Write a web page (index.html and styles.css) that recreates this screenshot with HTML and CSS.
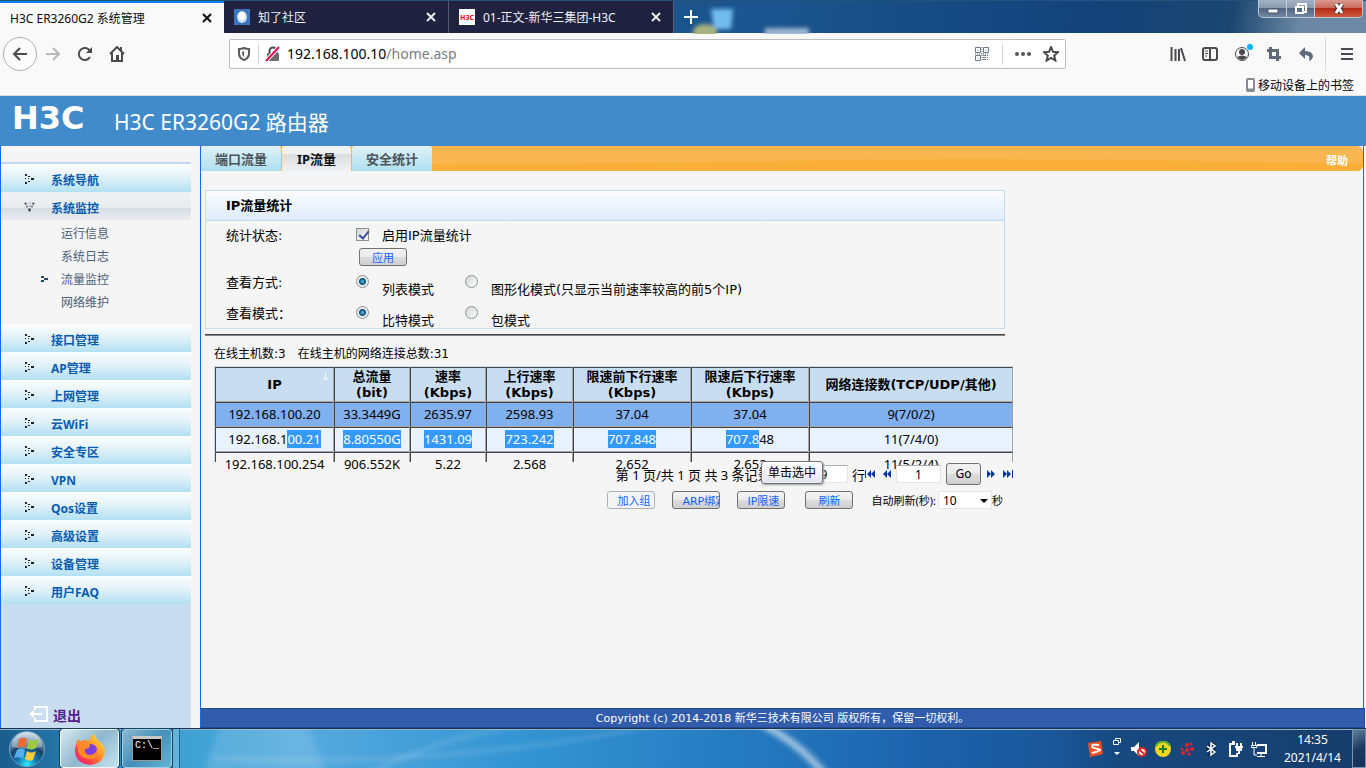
FILE: index.html
```html
<!DOCTYPE html>
<html lang="zh-CN">
<head>
<meta charset="UTF-8">
<meta name="viewport" content="width=device-width, initial-scale=1.0">
<title>H3C ER3260G2 系统管理</title>
<link rel="stylesheet" href="styles.css">
</head>
<body>

<header class="browser">
    <div class="titlebar">
        <div class="tab active"><span>H3C ER3260G2 系统管理</span>
            <button class="close" aria-label="关闭"><svg width="10" height="10"><path d="M1 1L9 9M9 1L1 9"/></svg></button></div>
        <div class="tab">
            <svg class="favicon" width="16" height="16"><rect width="16" height="16" fill="#3f73bd"/><ellipse cx="8" cy="8" rx="5" ry="6" fill="#cfe5f5"/><ellipse cx="8" cy="7" rx="3" ry="4" fill="#fff"/></svg>
            <span>知了社区</span>
            <button class="close" aria-label="关闭"><svg width="10" height="10"><path d="M1 1L9 9M9 1L1 9"/></svg></button></div>
        <div class="tab">
            <span class="favicon h3c">H3C</span>
            <span>01-正文-新华三集团-H3C</span>
            <button class="close" aria-label="关闭"><svg width="10" height="10"><path d="M1 1L9 9M9 1L1 9"/></svg></button></div>
        <button class="newtab" aria-label="新标签页"><svg width="14" height="14"><path d="M7 0V14M0 7H14" stroke="#fff" stroke-width="2"/></svg></button>
        <svg class="desktop" width="140" height="33">
            <defs><filter id="soft"><feGaussianBlur stdDeviation="2"/></filter></defs>
            <g filter="url(#soft)"><path d="M22 8h22l-2 20H25z" fill="#72bdf0"/><ellipse cx="16" cy="31" rx="12" ry="8" fill="#a9b27e"/><rect x="76" y="27" width="44" height="8" fill="#9db7d2"/></g>
        </svg>
        <div class="wincontrols">
            <button class="min" aria-label="最小化"><svg width="12" height="10"><rect x="1" y="5" width="10" height="4" fill="#fff" stroke="#4a5666"/></svg></button>
            <button class="max" aria-label="还原"><svg width="13" height="12" fill="none"><path d="M4 3V1h8v8h-3" stroke="#fff" stroke-width="2"/><rect x="2" y="4" width="7" height="6" stroke="#fff" stroke-width="2"/></svg></button>
            <button class="shut" aria-label="关闭窗口"><svg width="12" height="11"><path d="M3 1L9 10M9 1L3 10" stroke="#4b3034" stroke-width="5"/><path d="M3 1L9 10M9 1L3 10" stroke="#fff" stroke-width="3"/></svg></button>
        </div>
    </div>

    <div class="navbar">
        <button class="back" aria-label="后退"><svg class="ico" viewBox="0 0 16 16"><path d="M15 8H2M8 2L2 8l6 6"/></svg></button>
        <button class="navbtn off" aria-label="前进"><svg class="ico" viewBox="0 0 16 16"><path d="M1 8h13M8 2l6 6-6 6"/></svg></button>
        <button class="navbtn" aria-label="刷新"><svg class="ico" viewBox="0 0 16 16"><path d="M13 11a6 6 0 1 1 0-6"/><path d="M15 1v6H9z" fill="#4a4a4f" stroke="none"/></svg></button>
        <button class="navbtn" aria-label="主页"><svg class="ico" viewBox="0 0 16 16"><path d="M1 8l7-7 7 7M3 7v8h10V7M12 5V1"/><rect x="7" y="9" width="3" height="6" fill="#4a4a4f" stroke="none"/></svg></button>
        <div class="urlbar">
            <svg class="ico shield" viewBox="0 0 16 16"><path d="M8 2c2 1 3 1 5 1v4c0 4-2 6-5 7-3-1-5-3-5-7V3c2 0 3 0 5-1z"/><path d="M8 5v6C7 10 6 9 6 6z" fill="#5a5a5f" stroke="none"/></svg>
            <i class="sep"></i>
            <svg class="ico lock" viewBox="0 0 16 16"><path d="M4.500 7V5a3.500 3.500 0 0 1 7 0v2"/><rect x="2" y="7" width="12" height="8" rx="1" fill="#6b6b70" stroke="none"/><path d="M1 15L14 1" stroke="#fff" stroke-width="4"/><path d="M1 15L14 1" stroke="#e8104f" stroke-width="2"/></svg>
            <span class="url">192.168.100.10<em>/home.asp</em></span>
            <svg class="qr" width="14" height="14" fill="none" stroke="#6d7a89"><path d="M.5.5h5v5h-5zM8.500.5h5v5h-5zM.5 8.500h5v5h-5zM2.500 3h1M10.500 3h1M2.500 11h1"/><path d="M7 0v14M0 7h14M8 8.500h6M8 10.500h6M8 12.500h6M9.500 8v6M12.500 8v6" stroke-dasharray="1 1"/></svg>
            <i class="sep"></i>
            <svg class="dots" width="18" height="6" fill="#55555a"><circle cx="3" cy="3" r="2"/><circle cx="9" cy="3" r="2"/><circle cx="15" cy="3" r="2"/></svg>
            <svg class="ico" viewBox="0 0 16 16"><path d="M8 1l2 4.800 5 .4-3.800 3.400 1.200 5L8 12l-4.400 2.600 1.200-5L1 6.200l5-.4z"/></svg>
        </div>
        <button class="navbtn" aria-label="书库"><svg class="ico" viewBox="0 0 16 16"><path d="M1.500 1v14M5.500 3v12M9 3v12M11 2l4 13"/></svg></button>
        <button class="navbtn" aria-label="侧栏"><svg class="ico" viewBox="0 0 16 16"><rect x="1" y="2" width="14" height="12" rx="2"/><path d="M8 2v12"/><path d="M3 5h3M3 7.500h3M3 10h2" stroke-width="1"/></svg></button>
        <button class="navbtn account" aria-label="账户"><svg class="ico" viewBox="0 0 16 16"><circle cx="8" cy="8" r="6.500" stroke-width="1"/><circle cx="8" cy="6" r="3" fill="#4a4a4f" stroke="none"/><path d="M3 11q5-3 10 0-2 3-5 3t-5-3" fill="#4a4a4f" stroke="none"/></svg></button>
        <button class="navbtn" aria-label="截图"><svg class="ico blue" viewBox="0 0 16 16"><path d="M4.500 1v10.500H15M1 4.500h10.500V15" stroke-width="3"/></svg></button>
        <button class="navbtn" aria-label="撤销"><svg class="ico" viewBox="0 0 16 16"><path d="M1 7l6-6v4q8 0 8 6-1 3-4 4 2-6-4-6v4z" fill="#5f6b79" stroke="none"/></svg></button>
        <i class="navsep"></i>
        <button class="navbtn" aria-label="菜单"><svg class="ico" viewBox="0 0 16 16"><path d="M2 3h12M2 8h12M2 13h12"/></svg></button>
    </div>

    <div class="bookmarks">
        <svg width="9" height="14"><rect x="1" y="1" width="7" height="12" rx="1" fill="#fff" stroke="#858b92" stroke-width="2"/><path d="M1 12h7" stroke="#858b92" stroke-width="3"/></svg>
        <span>移动设备上的书签</span>
    </div>
</header>

<div class="brand">
    <span class="logo">H3C</span>
    <h1>H3C ER3260G2 路由器</h1>
</div>

<div class="page">
    <svg class="defs" width="0" height="0">
        <symbol id="arrow" viewBox="0 0 9 10"><path d="M0 0h2v2H0zM3 2h2v1H3zM0 4h1v1H0zM6 4h3v2H6zM3 7h2v1H3zM0 8h2v2H0zM3 4h1v1H3z"/></symbol>
    </svg>
    <nav class="sidebar">
        <a href="#" class="item"><svg><use href="#arrow"/></svg>系统导航</a>
        <a href="#" class="item open"><svg><use href="#arrow"/></svg>系统监控</a>
        <div class="sub">
            <a href="#">运行信息</a>
            <a href="#">系统日志</a>
            <a href="#" class="current"><svg width="7" height="6"><path d="M0 0h3v2H0zM3 2h4v2H3zM0 4h3v2H0z"/></svg>流量监控</a>
            <a href="#">网络维护</a>
        </div>
        <a href="#" class="item"><svg><use href="#arrow"/></svg>接口管理</a>
        <a href="#" class="item"><svg><use href="#arrow"/></svg>AP管理</a>
        <a href="#" class="item"><svg><use href="#arrow"/></svg>上网管理</a>
        <a href="#" class="item"><svg><use href="#arrow"/></svg>云WiFi</a>
        <a href="#" class="item"><svg><use href="#arrow"/></svg>安全专区</a>
        <a href="#" class="item"><svg><use href="#arrow"/></svg>VPN</a>
        <a href="#" class="item"><svg><use href="#arrow"/></svg>Qos设置</a>
        <a href="#" class="item"><svg><use href="#arrow"/></svg>高级设置</a>
        <a href="#" class="item"><svg><use href="#arrow"/></svg>设备管理</a>
        <a href="#" class="item"><svg><use href="#arrow"/></svg>用户FAQ</a>
        <div class="logout">
            <a href="#"><svg width="19" height="16" fill="none" stroke="#fff" stroke-width="2"><path d="M6 4V1h12v14H6v-3M13 8H3"/><path d="M0 8l5-4v8z" fill="#fff" stroke="none"/></svg>退出</a>
        </div>
    </nav>

    <main class="main">
        <div class="tabs">
            <a href="#">端口流量</a>
            <a href="#" class="selected">IP流量</a>
            <a href="#">安全统计</a>
            <svg class="wave" viewBox="0 0 930 25" preserveAspectRatio="none"><path d="M0 18Q200 17 420 14T930 18V25H0z" fill="#f9af38"/></svg>
            <a href="#" class="help">帮助</a>
        </div>

        <div class="content">
            <form class="panel">
                <h2>IP流量统计</h2>
                <div class="row first">
                    <span class="name">统计状态:</span>
                    <input type="checkbox" id="enable" checked><label for="enable">启用IP流量统计</label>
                </div>
                <div class="row apply"><button type="button" class="btn">应用</button></div>
                <div class="row radios">
                    <span class="name">查看方式:</span>
                    <span class="option"><input type="radio" name="view" id="list" checked><label for="list">列表模式</label></span>
                    <span class="option"><input type="radio" name="view" id="graph"><label for="graph">图形化模式(只显示当前速率较高的前5个IP)</label></span>
                </div>
                <div class="row radios">
                    <span class="name">查看模式：</span>
                    <span class="option"><input type="radio" name="mode" id="bit" checked><label for="bit">比特模式</label></span>
                    <span class="option"><input type="radio" name="mode" id="packet"><label for="packet">包模式</label></span>
                </div>
            </form>
            <hr>

            <div class="stats"><span>在线主机数:3</span><span>在线主机的网络连接总数:31</span></div>

            <div class="list">
                <table>
                    <colgroup><col class="c-ip"><col class="c-num"><col class="c-num"><col class="c-up"><col class="c-down"><col class="c-down"><col></colgroup>
                    <thead>
                        <tr>
                            <th class="sorted">IP<svg width="7" height="8" fill="none" stroke="#fff"><path d="M3.500 0v7M1 4.500l2.500 2.500L6 4.500"/></svg></th>
                            <th>总流量<br>(bit)</th>
                            <th>速率<br>(Kbps)</th>
                            <th>上行速率<br>(Kbps)</th>
                            <th>限速前下行速率<br>(Kbps)</th>
                            <th>限速后下行速率<br>(Kbps)</th>
                            <th>网络连接数(TCP/UDP/其他)</th>
                        </tr>
                    </thead>
                    <tbody>
                        <tr class="picked"><td>192.168.100.20</td><td>33.3449G</td><td>2635.97</td><td>2598.93</td><td>37.04</td><td>37.04</td><td>9(7/0/2)</td></tr>
                        <tr class="hover"><td>192.168.1<mark>00.21</mark></td><td><mark>8.80550G</mark></td><td><mark>1431.09</mark></td><td><mark>723.242</mark></td><td><mark>707.848</mark></td><td><mark>707.8</mark>48</td><td>11(7/4/0)</td></tr>
                        <tr class="cut"><td><div>192.168.100.254</div></td><td><div>906.552K</div></td><td><div>5.22</div></td><td><div>2.568</div></td><td><div>2.652</div></td><td><div>2.652</div></td><td><div>11(5/2/4)</div></td></tr>
                    </tbody>
                </table>

                <div class="pager">
                    <span>第 1 页/共 1 页 共 3 条记录 每页</span>
                    <input class="rows" type="text" value="9" aria-label="每页行数">
                    <span class="unit">行</span>
                    <button class="jump" aria-label="首页"><svg width="10" height="8"><path d="M0 0h1v8H0zM6 0v8L2 4zM10 0v8L6 4z"/></svg></button>
                    <button class="jump" aria-label="上一页"><svg width="10" height="8"><path d="M5 0v8L1 4zM9 0v8L5 4z"/></svg></button>
                    <input class="num" type="text" value="1" aria-label="页码">
                    <button class="btn go">Go</button>
                    <button class="jump" aria-label="下一页"><svg width="10" height="8"><path d="M1 0v8l4-4zM5 0v8l4-4z"/></svg></button>
                    <button class="jump" aria-label="末页"><svg width="10" height="8"><path d="M0 0v8l4-4zM4 0v8l4-4zM9 0h1v8H9z"/></svg></button>
                    <div class="tooltip">单击选中</div>
                </div>

                <div class="actions">
                    <button class="btn left" disabled>加入组</button>
                    <button class="btn left">ARP绑定</button>
                    <button class="btn left">IP限速</button>
                    <button class="btn refresh">刷新</button>
                    <label for="auto">自动刷新(秒):</label>
                    <div class="pick"><select id="auto"><option>10</option><option>30</option></select></div>
                    <span>秒</span>
                </div>
            </div>
        </div>

        <footer>Copyright (c) 2014-2018 新华三技术有限公司 版权所有，保留一切权利。</footer>
    </main>
</div>

<div class="taskbar">
    <button class="start" aria-label="开始">
        <svg width="38" height="38" viewBox="0 0 38 38">
            <defs>
                <radialGradient id="orb" cx="50%" cy="95%" r="90%"><stop offset="0" stop-color="#2df4ff"/><stop offset=".3" stop-color="#117eb8"/><stop offset=".6" stop-color="#17456b"/><stop offset="1" stop-color="#b5cbdc"/></radialGradient>
            </defs>
            <circle cx="19" cy="19" r="17.500" fill="url(#orb)" stroke="#6fa0bf"/>
            <path d="M4 17a15 15 0 0 1 30 0q-15 4-30 0z" fill="#fff" opacity=".35"/>
            <path d="M11 9q4-3 8 0l-2 9q-4-3-8 0z" fill="#ec6a35"/>
            <path d="M21 10q5 2 10-1l-3 9q-5 3-9 0z" fill="#9dc941"/>
            <path d="M9 20q4-3 8 0l-2 9q-4-3-9-1z" fill="#55b0ea"/>
            <path d="M19 21q4 3 9 0l-3 9q-4 2-8-1z" fill="#fbcb3e"/>
        </svg>
    </button>
    <button class="task on" aria-label="Firefox">
        <svg width="32" height="32" viewBox="0 0 32 32">
            <defs>
                <linearGradient id="fox" x1="1" y1="0" x2="0" y2="1"><stop offset="0" stop-color="#fff04a"/><stop offset=".4" stop-color="#ff9a27"/><stop offset=".7" stop-color="#ff4148"/><stop offset="1" stop-color="#e2139a"/></linearGradient>
            </defs>
            <path d="M20 1q2 5 6 8 5 4 5 9a15 14 0 0 1-30 0q0-6 4-12l1 3q2-2 4-2l5 1q1-5 5-7z" fill="url(#fox)"/>
            <circle cx="17" cy="17" r="6" fill="#7b3fe0"/>
            <path d="M2 9l3-3 1 3 5-1 5 4-1 3-4 1q-2 5 4 6 6 0 8-5 1 9-7 9-12-1-12-10z" fill="#ff8a2a"/>
        </svg>
    </button>
    <button class="task cmd" aria-label="命令提示符"><span class="console">C:\_</span></button>
    <i class="stack"></i>
    <svg class="glow" viewBox="0 0 860 40" preserveAspectRatio="none">
        <defs><filter id="haze"><feGaussianBlur stdDeviation="3"/></filter></defs>
        <g filter="url(#haze)" fill="none" stroke="#fff">
            <path d="M180 46Q240 10 330-6" stroke-width="5" opacity=".13"/>
            <path d="M30 30Q260 40 450-4" stroke-width="5" opacity=".12"/>
            <path d="M550-6Q590 16 612 48" stroke-width="7" opacity=".6"/>
            <path d="M40-10h80l20 60H20z" fill="#fff" stroke="none" opacity=".12"/>
        </g>
    </svg>
    <div class="tray">
        <svg width="16" height="16"><path d="M1 2l13-2 2 13-13 3z" fill="#f0501f"/><path d="M12 4q-7-1-7 1t6 3-6 4" fill="none" stroke="#fff" stroke-width="2"/></svg>
        <svg class="small" width="8" height="18" fill="none" stroke="#fff"><path d="M2.500 2V.5h5v4H6M.5 2.500h5v4h-5z"/><path d="M1 14h6l-3 3z" fill="#fff" stroke="none"/></svg>
        <svg width="16" height="16"><path d="M0 6h3l5-5v14l-5-5H0z" fill="#fff"/><circle cx="11" cy="11" r="4" fill="#fff" stroke="#e02929" stroke-width="2"/><path d="M8 8l6 6" stroke="#e02929" stroke-width="2"/></svg>
        <svg width="16" height="16"><circle cx="8" cy="8" r="8" fill="#f5d51e"/><path d="M1 5a8 8 0 0 1 14 0" fill="none" stroke="#58b72e" stroke-width="2"/><path d="M8 4v8M4 8h8" stroke="#188028" stroke-width="2"/></svg>
        <svg width="16" height="16" fill="#e52430"><circle cx="8" cy="9" r="2"/><circle cx="3" cy="8" r="1.500"/><circle cx="8" cy="4" r="2"/><circle cx="12" cy="3" r="1.500"/><circle cx="13" cy="8" r="2"/><circle cx="4" cy="12" r="2"/><circle cx="10" cy="13" r="1.500"/></svg>
        <svg width="16" height="16" fill="none"><ellipse cx="8" cy="8" rx="5" ry="8" fill="#12305a"/><path d="M4 5l8 6-4 3V2l4 3-8 6" stroke="#fff" stroke-width="1.500"/></svg>
        <svg width="16" height="16" fill="none" stroke="#fff" stroke-width="2"><path d="M8 3H3v12h7v-3M5 1h3"/><path d="M10 2v4M14 2v4M8 6h8M12 8v5"/><path d="M9 7h6v3H9z" fill="#fff" stroke="none"/></svg>
        <svg width="16" height="16" fill="none" stroke="#fff"><path d="M6 4h9v8H6" stroke-width="2"/><path d="M10 12v3M6 15.500h8M1.500 1v3M4.500 1v3M0 4.500h6v2H0zM3 7v7h3" stroke-width="1"/></svg>
    </div>
    <div class="clock"><span>14:35</span><span>2021/4/14</span></div>
    <button class="peek" aria-label="显示桌面"></button>
</div>

</body>
</html>
```
FILE: styles.css
```css
* {
    box-sizing: border-box;
}
body {
    margin: 0;
    height: 100vh;
    display: flex;
    flex-direction: column;
    overflow: hidden;
    background: #f5f5f5;
    font-family: "Noto Sans", "Noto Sans CJK SC", sans-serif;
    font-size: 12px;
    color: #000;
}
button, input, select {
    font-family: inherit;
    font-size: 12px;
    margin: 0;
    padding: 0;
}
button {
    border: none;
    background: none;
}
a {
    text-decoration: none;
}

/* browser window */
.browser {
    background: #f9f9fa;
    border-bottom: 1px solid #e0e0e2;
}
.titlebar {
    position: relative;
    display: flex;
    height: 33px;
    background: linear-gradient(100deg, #1c4a74 0%, #1b558f 55%, #13427a 80%, #1c466f 90%, #6a87a3 95%, #6d89a6 100%);
    border-top: 1px solid #23527c;
}
.tab {
    display: flex;
    align-items: center;
    width: 225px;
    padding: 0 12px 0 10px;
    background: #20233f;
    border-right: 1px solid #585a6e;
    color: #f0f0f4;
}
.tab.active {
    width: 224px;
    background: #f9f9fa;
    border-top: 2px solid #0a84ff;
    border-right: none;
    color: #0c0c0d;
}
.favicon {
    width: 16px;
    height: 16px;
    margin-right: 8px;
}
.h3c {
    background: #fff;
    color: #e60012;
    font-size: 7px;
    font-weight: bold;
    line-height: 18px;
    text-align: center;
}
.close {
    display: flex;
    margin-left: auto;
}
.close svg {
    stroke: currentColor;
    stroke-width: 2;
}
.tab .close {
    color: inherit;
}
.newtab {
    display: flex;
    align-items: center;
    width: 30px;
    padding-left: 10px;
}
.newtab svg {
    z-index: 1;
}
.desktop {
    margin-left: -15px;
}
.wincontrols {
    display: flex;
    height: 18px;
    margin: -1px 3px 0 auto;
    border: 1px solid #b9c6d3;
    border-top: none;
    border-radius: 0 0 5px 5px;
    background: linear-gradient(#a5b3c3 0%, #8a9bb0 45%, #50647f 50%, #7188a3 100%);
    overflow: hidden;
}
.wincontrols button {
    display: flex;
    align-items: center;
    justify-content: center;
    width: 28px;
    border-right: 1px solid #c3cdd8;
}
.wincontrols .shut {
    width: 47px;
    border: none;
    background: linear-gradient(#d99a90 0%, #cc6b5a 45%, #b12d18 50%, #d0593c 100%);
}
.navbar {
    display: flex;
    align-items: center;
    height: 41px;
    padding: 0 3px;
}
.ico {
    width: 16px;
    height: 16px;
    fill: none;
    stroke: #4a4a4f;
    stroke-width: 2;
}
.back {
    display: flex;
    align-items: center;
    justify-content: center;
    width: 34px;
    height: 34px;
    border: 1px solid #b1b1b3;
    border-radius: 50%;
    background: #fcfcfd;
}
.navbtn {
    display: flex;
    align-items: center;
    justify-content: center;
    width: 32px;
    height: 32px;
}
.off .ico {
    stroke: #b8b8ba;
}
.ico.blue {
    stroke: #5f6b79;
}
.account {
    position: relative;
}
.account::after {
    content: "";
    position: absolute;
    top: 6px;
    right: 5px;
    width: 6px;
    height: 6px;
    border-radius: 50%;
    background: #00b3f4;
}
.urlbar {
    flex: 1;
    display: flex;
    align-items: center;
    height: 30px;
    margin: 0 96px;
    padding: 0 6px;
    border: 1px solid #bcbcbe;
    border-radius: 2px;
    background: #fff;
    font-size: 14px;
}
.urlbar .shield {
    stroke: #5a5a5f;
}
.sep {
    width: 1px;
    height: 22px;
    margin: 0 6px;
    background: #d9d9db;
}
.url {
    flex: 1;
    margin-left: 6px;
}
.url em {
    font-style: normal;
    color: #7b7b80;
}
.qr {
    margin-right: 7px;
}
.dots {
    margin: 0 11px 0 5px;
}
.navsep {
    width: 1px;
    height: 34px;
    margin: 0 5px 0 3px;
    background: #d9d9db;
}
.bookmarks {
    display: flex;
    align-items: center;
    justify-content: flex-end;
    gap: 3px;
    height: 21px;
    padding-right: 12px;
}

/* router page */
.brand {
    display: flex;
    align-items: center;
    height: 50px;
    padding: 0 12px;
    background: #428bca;
    color: #fff;
}
.logo {
    width: 102px;
    padding-bottom: 6px;
    font-family: "DejaVu Sans", sans-serif;
    font-size: 32px;
    font-weight: bold;
    line-height: 32px;
}
.brand h1 {
    margin: 0;
    font-size: 21px;
    font-weight: normal;
}
.page {
    flex: 1;
    display: grid;
    grid-template-columns: 200px 1fr;
    min-height: 0;
}
.defs {
    position: absolute;
}
.sidebar {
    display: flex;
    flex-direction: column;
    margin-right: 9px;
    padding-top: 16px;
    border-left: 1px solid #0a6ff0;
}
.item {
    display: flex;
    align-items: center;
    flex: none;
    height: 28px;
    padding: 4px 0 0 24px;
    background: linear-gradient(#fdfeff 0%, #e3f2f8 45%, #b2e0f3 100%);
    color: #0a5cb0;
    font-weight: bold;
}
.item:first-child {
    height: 30px;
    border-top: 2px solid #bfd7ef;
}
.item svg {
    width: 9px;
    height: 10px;
    margin: 0 17px 3px 0;
    fill: #223;
}
.item.open {
    background: linear-gradient(#eef1f3 0%, #e8ecef 55%, #d6dce1 58%, #e9edf0 100%);
}
.open svg {
    transform: rotate(90deg);
}
.sub {
    padding: 1px 0 11px;
}
.sub a {
    display: flex;
    align-items: center;
    height: 23px;
    padding-left: 60px;
    color: #4b6078;
}
.sub .current {
    padding-left: 40px;
}
.current svg {
    margin-right: 13px;
    fill: #234a63;
}
.logout {
    flex: 1;
    display: flex;
    align-items: flex-end;
    padding: 0 0 2px 28px;
    background: #c9ddf1;
}
.logout a {
    display: flex;
    align-items: center;
    gap: 5px;
    color: #551a8b;
    font-size: 14px;
    font-weight: bold;
    line-height: 20px;
}
.logout svg {
    margin-bottom: 4px;
}
.main {
    display: flex;
    flex-direction: column;
    min-width: 0;
    margin-right: 2px;
    border-left: 1px solid #0a6ff0;
    border-right: 1px solid #0a6ff0;
}
.tabs {
    position: relative;
    display: flex;
    gap: 1px;
    height: 25px;
    border-radius: 0 6px 6px 0;
    background: #f8b650;
    font-size: 13px;
    font-weight: bold;
    overflow: hidden;
}
.tabs a {
    width: 80px;
    border-radius: 3px 3px 0 0;
    background: linear-gradient(#e0f2f8, #aedff0);
    color: #4d5459;
    line-height: 26px;
    text-align: center;
}
.tabs .selected {
    width: 69px;
    background: linear-gradient(#f0f1f2 30%, #d9dde0 32%, #f0f1f2);
    color: #111;
}
.wave {
    flex: 1;
    min-width: 0;
    height: 25px;
    margin-left: -1px;
}
.tabs .help {
    position: absolute;
    right: 15px;
    width: auto;
    background: none;
    color: #fff;
    font-size: 11px;
    line-height: 30px;
}
.content {
    padding: 19px 4px 0;
}
.panel {
    max-width: 800px;
    border: 1px solid #c5dbf0;
    font-family: "DejaVu Sans", "Noto Sans CJK SC", sans-serif;
    font-size: 13px;
}
.panel h2 {
    margin: 0;
    padding-left: 20px;
    border-bottom: 1px solid #c5dbf0;
    background: linear-gradient(#fcfdff, #deebfb);
    font-size: 13px;
    line-height: 29px;
}
.row {
    display: flex;
    align-items: center;
    height: 31px;
    padding-left: 20px;
}
.row.first {
    height: 26px;
}
.row.apply {
    height: 19px;
    padding-left: 153px;
}
.name {
    width: 130px;
}
.option {
    display: flex;
    align-items: center;
    min-width: 109px;
}
.radios label {
    padding-top: 13px;
}
.row input {
    position: relative;
    width: 13px;
    height: 13px;
    margin-right: 13px;
    appearance: none;
    border: 1px solid #8e8f8f;
    background: linear-gradient(135deg, #d2d6da, #fbfbfb);
}
.row input[type="radio"] {
    border-radius: 50%;
}
.row input[type="radio"]:checked {
    background: radial-gradient(circle, #4bc2ec 0, #174b70 3px, #e9edf0 4px);
}
.row input[type="checkbox"]:checked::after {
    content: "";
    position: absolute;
    top: 0;
    left: 4px;
    width: 4px;
    height: 8px;
    border: solid #3c4f9c;
    border-width: 0 2px 2px 0;
    transform: rotate(40deg);
}
hr {
    max-width: 800px;
    height: 2px;
    margin: 5px 0 0;
    border: none;
    border-top: 1px solid #444;
    background: #888;
}
.stats {
    display: flex;
    gap: 12px;
    padding: 6px 9px 0;
    font-family: "DejaVu Sans", "Noto Sans CJK SC", sans-serif;
    line-height: 24px;
}
.list {
    max-width: 808px;
    padding-left: 9px;
}
table {
    width: 100%;
    table-layout: fixed;
    border-collapse: separate;
    border-spacing: 0;
    border: 1px solid #c5dbf0;
    border-width: 1px 0 0 1px;
    text-align: center;
    font-size: 13px;
}
.c-ip {
    width: 119px;
}
.c-num {
    width: 76px;
}
.c-up {
    width: 87px;
}
.c-down {
    width: 118px;
}
th, td {
    padding: 0;
    border: 1px solid;
    border-color: #444 #a5a5a5 #a5a5a5 #444;
}
th {
    height: 35px;
    background: #c9ddf0;
    font-family: "DejaVu Sans", "Noto Sans CJK SC", sans-serif;
    line-height: 16px;
}
td {
    height: 25px;
    padding-bottom: 2px;
    line-height: 16px;
}
.sorted {
    position: relative;
}
.sorted svg {
    position: absolute;
    top: 5px;
    right: 4px;
}
.picked {
    background: #80b0ee;
}
.hover {
    background: #e8f3fe;
}
mark {
    background: #3399ff;
    color: #fff;
}
.cut td {
    height: 10px;
    padding: 0;
    border-bottom: none;
}
.cut div {
    height: 9px;
    line-height: 23px;
}
.pager {
    position: relative;
    display: flex;
    align-items: center;
    justify-content: flex-end;
    height: 24px;
    font-size: 13px;
}
.pager input {
    height: 18px;
    border: 1px solid #e3e5ea;
    border-top-color: #aaadb5;
    background: #fff;
    text-align: center;
}
.pager .rows {
    width: 48px;
    margin-right: 4px;
}
.pager .num {
    width: 45px;
    margin: 0 5px 0 4px;
}
.jump {
    display: flex;
    width: 10px;
    fill: #0a37a0;
}
.jump + .jump {
    margin-left: 7px;
}
.btn {
    width: 48px;
    height: 18px;
    border: 1px solid #707070;
    border-radius: 3px;
    background: linear-gradient(#f2f2f2 0%, #ebebeb 48%, #dcdcdc 50%, #cfcfcf 100%);
    color: #1062ff;
    font-family: "DejaVu Sans", "Noto Sans CJK SC", sans-serif;
    font-size: 11px;
    line-height: 16px;
    padding-top: 2px;
    white-space: nowrap;
    overflow: hidden;
}
.btn:disabled {
    border-color: #adb2b5;
    background: #f4f4f4;
}
.left {
    padding-left: 9px;
    text-align: left;
}
.go {
    width: 35px;
    height: 22px;
    margin-right: 5px;
    padding: 0;
    color: #000;
    font-family: inherit;
    font-size: 12px;
}
.tooltip {
    position: absolute;
    top: -1px;
    right: 190px;
    width: 62px;
    height: 23px;
    border: 1px solid #767676;
    border-radius: 3px;
    background: linear-gradient(#fff, #e4e5f0);
    box-shadow: 1px 1px 2px #999;
    font-size: 12px;
    line-height: 22px;
    text-align: center;
}
.actions {
    display: flex;
    align-items: center;
    justify-content: flex-end;
    gap: 17px;
    height: 28px;
    padding-right: 10px;
    font-size: 11px;
}
.refresh {
    margin: 0 2px 0 3px;
}
.pick {
    position: relative;
    margin: 0 -17px 0 -13px;
}
.actions label {
    margin: 0 0 0 -1px;
}
.actions .pick {
    margin-left: -15px;
}
.pick::after {
    content: "";
    position: absolute;
    top: 8px;
    right: 4px;
    border: 4px solid transparent;
    border-top-color: #000;
    border-bottom: none;
}
.pick select {
    display: block;
    width: 54px;
    height: 18px;
    padding-left: 4px;
    appearance: none;
    border: 1px solid #e3e5ea;
    background: #fff;
    color: #000;
}
footer {
    height: 20px;
    margin: auto -2px 0 0;
    border: 1px solid #25488e;
    border-left: none;
    background: #315cac;
    color: #fff;
    font-family: "DejaVu Sans", "Noto Sans CJK SC", sans-serif;
    font-size: 11px;
    line-height: 19px;
    text-align: center;
}

/* windows taskbar */
.taskbar {
    position: relative;
    display: flex;
    align-items: center;
    height: 40px;
    border-top: 1px solid #17344e;
    box-shadow: inset 0 1px #8fb4d2;
    background: linear-gradient(90deg, #1b5c8c 0%, #2474a5 4%, #3aa0d3 12%, #55aade 22%, #3495d3 38%, #2479bf 55%, #1c62ab 68%, #1a5799 77%, #17497f 82%, #163c6a 100%);
}
.start {
    width: 60px;
    height: 38px;
    padding-left: 8px;
    text-align: left;
}
.task {
    display: flex;
    align-items: center;
    justify-content: center;
    z-index: 1;
    width: 59px;
    height: 39px;
    border: 1px solid #f0f8fc;
    border-radius: 3px;
    outline: 1px solid #17415d;
    outline-offset: 0;
    background: linear-gradient(135deg, #d9e9f2, #8fb7ce 50%, #c5e4f1);
}
.task.cmd {
    width: 50px;
    margin-left: 3px;
    border-color: #9ed0e5;
    background: linear-gradient(135deg, #8cb9d1, #438fb8 50%, #66b5d6);
}
.console {
    width: 30px;
    height: 25px;
    padding-top: 2px;
    border: 1px solid #999;
    border-top: 3px solid #c9c9c9;
    background: #000;
    color: #fff;
    font-family: "Liberation Mono", monospace;
    font-size: 10px;
    line-height: 10px;
}
.stack {
    width: 8px;
    height: 39px;
    border: solid #20668f;
    border-width: 0 1px;
    background: #61b5da;
}
.glow {
    flex: 1;
    min-width: 0;
    height: 39px;
}
.tray {
    display: flex;
    align-items: center;
    gap: 8px;
}
.tray .small {
    margin: -3px 2px 0;
    align-self: flex-start;
}
.clock {
    display: flex;
    flex-direction: column;
    width: 85px;
    padding-left: 6px;
    color: #fff;
    line-height: 18px;
    text-align: center;
}
.peek {
    width: 14px;
    height: 39px;
    border: 1px solid #7895ad;
    background: linear-gradient(150deg, #6482a0, #1a3a60 50%, #12305a);
}
```
